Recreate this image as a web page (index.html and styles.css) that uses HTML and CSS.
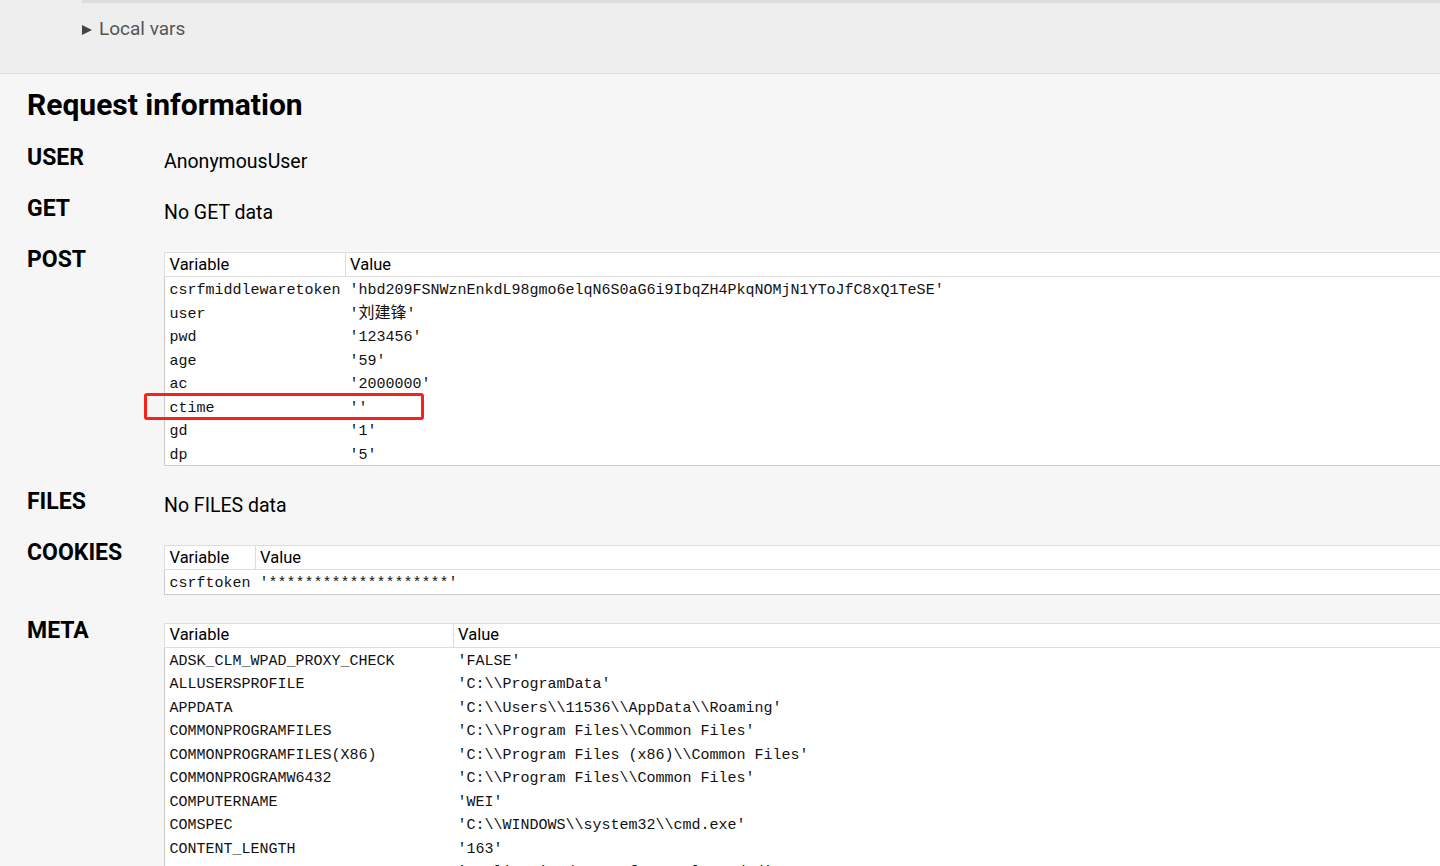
FILE: index.html
```html
<!DOCTYPE html>
<html lang="en">
<head>
<meta charset="utf-8">
<title>Request information</title>
<link rel="stylesheet" href="styles.css">
</head>
<body>
<div class="traceback">
  <div class="frame-bar"></div>
  <div class="localvars"><span class="tri"></span><span class="lv-text">Local vars</span></div>
</div>
<div class="requestinfo">
  <h2>Request information</h2>

  <div class="section text">
    <h3>USER</h3>
    <p>AnonymousUser</p>
  </div>

  <div class="section text">
    <h3>GET</h3>
    <p>No GET data</p>
  </div>

  <div class="section tbl">
    <h3>POST</h3>
    <div class="tablewrap">
      <table class="req">
        <thead><tr><th>Variable</th><th>Value</th></tr></thead>
        <tbody>
          <tr><td>csrfmiddlewaretoken</td><td>'hbd209FSNWznEnkdL98gmo6elqN6S0aG6i9IbqZH4PkqNOMjN1YToJfC8xQ1TeSE'</td></tr>
          <tr><td>user</td><td>'<span class="cjk">刘建锋</span>'</td></tr>
          <tr><td>pwd</td><td>'123456'</td></tr>
          <tr><td>age</td><td>'59'</td></tr>
          <tr><td>ac</td><td>'2000000'</td></tr>
          <tr><td>ctime</td><td>''</td></tr>
          <tr><td>gd</td><td>'1'</td></tr>
          <tr><td>dp</td><td>'5'</td></tr>
        </tbody>
      </table>
      <div class="highlight"></div>
    </div>
  </div>

  <div class="section text">
    <h3>FILES</h3>
    <p>No FILES data</p>
  </div>

  <div class="section tbl">
    <h3>COOKIES</h3>
    <div class="tablewrap">
      <table class="req">
        <thead><tr><th>Variable</th><th>Value</th></tr></thead>
        <tbody>
          <tr><td>csrftoken</td><td>'********************'</td></tr>
        </tbody>
      </table>
    </div>
  </div>

  <div class="section tbl">
    <h3>META</h3>
    <div class="tablewrap">
      <table class="req">
        <thead><tr><th>Variable</th><th>Value</th></tr></thead>
        <tbody>
          <tr><td>ADSK_CLM_WPAD_PROXY_CHECK</td><td>'FALSE'</td></tr>
          <tr><td>ALLUSERSPROFILE</td><td>'C:\\ProgramData'</td></tr>
          <tr><td>APPDATA</td><td>'C:\\Users\\11536\\AppData\\Roaming'</td></tr>
          <tr><td>COMMONPROGRAMFILES</td><td>'C:\\Program Files\\Common Files'</td></tr>
          <tr><td>COMMONPROGRAMFILES(X86)</td><td>'C:\\Program Files (x86)\\Common Files'</td></tr>
          <tr><td>COMMONPROGRAMW6432</td><td>'C:\\Program Files\\Common Files'</td></tr>
          <tr><td>COMPUTERNAME</td><td>'WEI'</td></tr>
          <tr><td>COMSPEC</td><td>'C:\\WINDOWS\\system32\\cmd.exe'</td></tr>
          <tr><td>CONTENT_LENGTH</td><td>'163'</td></tr>
          <tr><td>CONTENT_TYPE</td><td>'application/x-www-form-urlencoded'</td></tr>
          <tr><td>CSRF_COOKIE</td><td>'********************'</td></tr>
          <tr><td>DJANGO_SETTINGS_MODULE</td><td>'day16.settings'</td></tr>
          <tr><td>DRIVERDATA</td><td>'C:\\Windows\\System32\\Drivers\\DriverData'</td></tr>
          <tr><td>FPS_BROWSER_APP_PROFILE_STRING</td><td>'Internet Explorer'</td></tr>
          <tr><td>FPS_BROWSER_USER_PROFILE_STRING</td><td>'Default'</td></tr>
          <tr><td>GATEWAY_INTERFACE</td><td>'CGI/1.1'</td></tr>
          <tr><td>HOMEDRIVE</td><td>'C:'</td></tr>
          <tr><td>HOMEPATH</td><td>'\\Users\\11536'</td></tr>
        </tbody>
      </table>
    </div>
  </div>
</div>
</body>
</html>
```

FILE: styles.css
```css
html, body {
  margin: 0;
  padding: 0;
  overflow-x: hidden;
}

body {
  font-family: Roboto, "Noto Sans CJK SC", sans-serif;
  color: #000;
  background: #f6f6f6;
}

.traceback {
  background: #eee;
  height: 73px;
  border-bottom: 1px solid #ddd;
}

.frame-bar {
  margin-left: 82px;
  height: 3px;
  background: #ddd;
}

.localvars {
  display: flex;
  align-items: center;
  margin-top: 13px;
  padding-left: 82px;
}

.tri {
  width: 0;
  height: 0;
  border-left: 10px solid #444;
  border-top: 5.5px solid transparent;
  border-bottom: 5.5px solid transparent;
  margin-right: 7px;
  margin-top: 2px;
}

.lv-text {
  font-size: 19px;
  line-height: 26px;
  color: #555;
}

.requestinfo {
  padding: 13px 0 40px 27px;
}

h2 {
  margin: 0 0 21px 0;
  font-size: 30px;
  line-height: 36px;
  font-weight: bold;
}

.section {
  display: grid;
  grid-template-columns: 137px 1fr;
  align-items: start;
  margin-bottom: 20px;
}

.section.tbl {
  margin-bottom: 22px;
}

h3 {
  margin: 0;
  font-size: 23px;
  line-height: 28px;
  font-weight: bold;
}

.section p {
  margin: 5px 0 0 0;
  font-size: 19.5px;
  line-height: 26px;
}

.tablewrap {
  position: relative;
  margin-top: 6px;
}

table.req {
  border-collapse: collapse;
  width: calc(100% + 40px);
  background: #fff;
  border: 1px solid #ccc;
}

table.req thead th {
  font-family: Roboto, sans-serif;
  font-size: 16.5px;
  line-height: 20px;
  font-weight: normal;
  text-align: left;
  padding: 1.5px 9px 1.5px 4.5px;
  border: 1px solid #ddd;
  background: #fefefe;
  white-space: nowrap;
}

table.req tbody td {
  font-family: "Liberation Mono", "Noto Sans CJK SC", monospace;
  font-size: 15px;
  line-height: 17.5px;
  padding: 5px 4.5px 1px 4.5px;
  vertical-align: top;
  white-space: pre;
  color: #111;
}

table.req tbody td:first-child {
  width: 1px;
}

.cjk {
  font-family: "Noto Sans CJK SC", sans-serif;
  font-size: 16px;
  line-height: 0;
}

.highlight {
  position: absolute;
  left: -20px;
  top: 141px;
  width: 280px;
  height: 27px;
  box-sizing: border-box;
  border: 3px solid #f5231c;
  border-radius: 3px;
  pointer-events: none;
}
```
